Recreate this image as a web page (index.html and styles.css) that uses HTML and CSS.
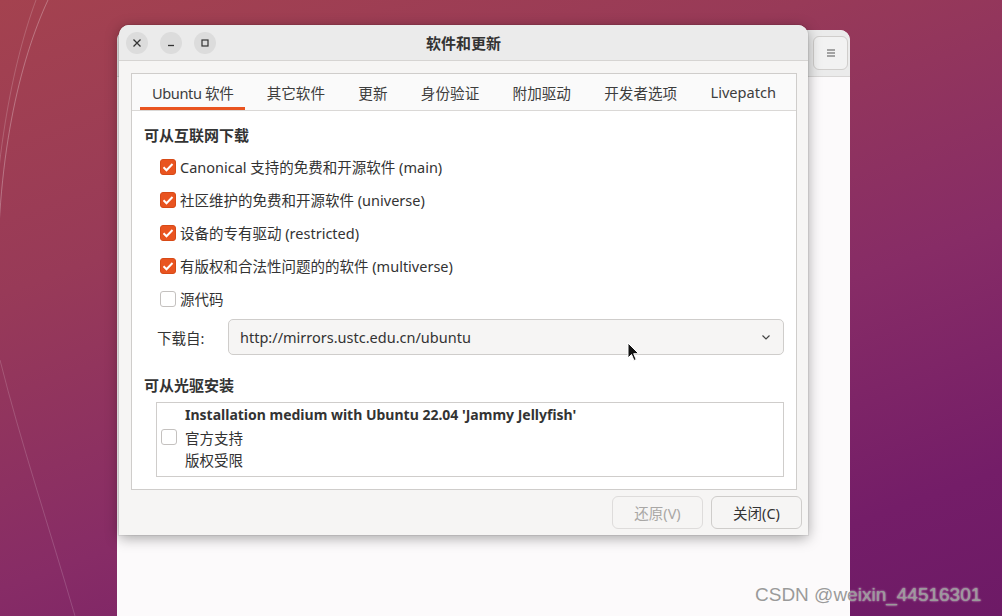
FILE: index.html
```html
<!DOCTYPE html>
<html lang="zh-CN">
<head>
    <meta charset="UTF-8">
    <title>软件和更新</title>
    <link rel="stylesheet" href="styles.css">
</head>
<body>

    <div class="desktop">
        <svg class="arcs" width="1002" height="616" viewBox="0 0 1002 616">
            <path d="M48 0 C 20 60, -5 160, -2 300" stroke="rgba(255,255,255,0.28)" stroke-width="1" fill="none"/>
            <path d="M36 0 C 10 70, -10 180, -8 320" stroke="rgba(255,255,255,0.18)" stroke-width="1" fill="none"/>
            <path d="M0 360 C 20 440, 50 530, 75 616" stroke="rgba(255,255,255,0.16)" stroke-width="1" fill="none"/>
        </svg>

        <!-- janela de tras -->
        <div class="janela-fundo">
            <div class="fundo-header">
                <span class="menu-btn">
                    <svg width="12" height="12" viewBox="0 0 12 12"><path d="M2 3h8M2 6h8M2 9h8" stroke="#555" stroke-width="1.2"/></svg>
                </span>
            </div>
            <div class="fundo-corpo"></div>
        </div>

        <!-- dialogo principal -->
        <div class="dialogo">
            <div class="titulo">
                <div class="controles">
                    <span class="ctrl">
                        <svg width="10" height="10" viewBox="0 0 10 10"><path d="M1.5 1.5l7 7M8.5 1.5l-7 7" stroke="#333" stroke-width="1.3"/></svg>
                    </span>
                    <span class="ctrl">
                        <svg width="10" height="10" viewBox="0 0 10 10"><path d="M2 7.5h6" stroke="#333" stroke-width="1.3"/></svg>
                    </span>
                    <span class="ctrl">
                        <svg width="10" height="10" viewBox="0 0 10 10"><rect x="2" y="2" width="6" height="6" stroke="#333" stroke-width="1.2" fill="none"/></svg>
                    </span>
                </div>
                <div class="titulo-texto">软件和更新</div>
            </div>

            <div class="conteudo">
                <div class="notebook">
                    <div class="abas">
                        <span class="aba ativa">Ubuntu 软件</span>
                        <span class="aba">其它软件</span>
                        <span class="aba">更新</span>
                        <span class="aba">身份验证</span>
                        <span class="aba">附加驱动</span>
                        <span class="aba">开发者选项</span>
                        <span class="aba">Livepatch</span>
                    </div>

                    <div class="pagina">
                        <h3 class="secao-titulo">可从互联网下载</h3>
                        <div class="opcoes">
                            <label class="opcao"><span class="check marcado"></span>Canonical 支持的免费和开源软件 (main)</label>
                            <label class="opcao"><span class="check marcado"></span>社区维护的免费和开源软件 (universe)</label>
                            <label class="opcao"><span class="check marcado"></span>设备的专有驱动 (restricted)</label>
                            <label class="opcao"><span class="check marcado"></span>有版权和合法性问题的的软件 (multiverse)</label>
                            <label class="opcao"><span class="check"></span>源代码</label>
                        </div>

                        <div class="download">
                            <span class="download-label">下载自:</span>
                            <div class="combo">
                                <span>http://mirrors.ustc.edu.cn/ubuntu</span>
                                <svg width="12" height="12" viewBox="0 0 12 12"><path d="M2.5 4.5l3.5 3.5 3.5-3.5" stroke="#444" stroke-width="1.2" fill="none"/></svg>
                                <svg class="cursor" width="14" height="20" viewBox="0 0 14 20"><path d="M1 1v15l3.5-3.5 2.5 6 2.2-1-2.5-5.8h5z" fill="#111" stroke="#fff" stroke-width="1"/></svg>
                            </div>
                        </div>

                        <h3 class="secao-titulo cd">可从光驱安装</h3>
                        <div class="cdrom">
                            <span class="check"></span>
                            <div class="cdrom-texto">
                                <strong>Installation medium with Ubuntu 22.04 'Jammy Jellyfish'</strong>
                                <span>官方支持</span>
                                <span>版权受限</span>
                            </div>
                        </div>
                    </div>
                </div>

                <div class="botoes">
                    <button class="btn" disabled>还原(V)</button>
                    <button class="btn">关闭(C)</button>
                </div>
            </div>
        </div>

        <div class="marca">CSDN @weixin_44516301</div>
    </div>

</body>
</html>
```

FILE: styles.css
```css
/* Geral */
body {
    margin: 0;
    font-family: "Noto Sans", "Noto Sans CJK SC", sans-serif;
    color: #333;
}

.desktop {
    position: relative;
    width: 1002px;
    height: 616px;
    overflow: hidden;
    background: linear-gradient(160deg, #a4424f 0%, #983a58 30%, #872c66 60%, #741d68 85%, #6d1a66 100%);
}

.arcs {
    position: absolute;
    left: 0;
    top: 0;
}

/* Janela de fundo */
.janela-fundo {
    position: absolute;
    left: 117px;
    top: 30px;
    width: 733px;
    height: 600px;
    background-color: #fcfafb;
    border-radius: 10px 10px 0 0;
    display: flex;
    flex-direction: column;
}

.fundo-header {
    height: 46px;
    background-color: #ebebeb;
    border-bottom: 1px solid #d8d6d5;
    border-radius: 10px 10px 0 0;
    display: flex;
    justify-content: flex-end;
    align-items: center;
    padding-right: 2px;
}

.menu-btn {
    width: 33px;
    height: 32px;
    border: 1px solid #d0cecc;
    border-radius: 6px;
    background-color: #f2f2f2;
    display: flex;
    align-items: center;
    justify-content: center;
}

.fundo-corpo {
    flex: 1;
}

/* Dialogo */
.dialogo {
    position: absolute;
    left: 119px;
    top: 25px;
    width: 689px;
    height: 510px;
    background-color: #f6f5f4;
    border-radius: 10px 10px 0 0;
    box-shadow: 0 3px 14px rgba(0, 0, 0, 0.35), 0 0 0 1px rgba(0, 0, 0, 0.06);
    display: flex;
    flex-direction: column;
}

.titulo {
    position: relative;
    height: 35px;
    background-color: #ebebeb;
    border-bottom: 1px solid #d6d4d2;
    border-radius: 10px 10px 0 0;
    display: flex;
    align-items: center;
    justify-content: center;
}

.controles {
    position: absolute;
    left: 7px;
    top: 7px;
    display: flex;
    gap: 12px;
}

.ctrl {
    width: 22px;
    height: 22px;
    border-radius: 50%;
    background-color: #dcdcdc;
    display: flex;
    align-items: center;
    justify-content: center;
}

.titulo-texto {
    font-weight: bold;
    font-size: 15px;
    color: #333;
}

.conteudo {
    flex: 1;
    padding: 12px 11px 0 12px;
    display: flex;
    flex-direction: column;
}

/* Notebook */
.notebook {
    height: 415px;
    border: 1px solid #cfcdcb;
    background-color: #ffffff;
    display: flex;
    flex-direction: column;
}

.abas {
    height: 36px;
    background-color: #fafafa;
    border-bottom: 1px solid #dad8d6;
    display: flex;
    padding-left: 8px;
}

.aba {
    font-size: 14.6px;
    color: #3d3d3d;
    padding: 3px 12px 0 12px;
    margin-right: 9.3px;
    display: flex;
    align-items: center;
    white-space: nowrap;
    border-bottom: 3px solid transparent;
}

.aba.ativa {
    border-bottom-color: #e95420;
    letter-spacing: -0.4px;
}

.pagina {
    padding: 13px 12px 0 12px;
}

.secao-titulo {
    margin: 0;
    font-size: 15px;
    font-weight: bold;
    color: #333;
    line-height: 22px;
}

.opcoes {
    display: flex;
    flex-direction: column;
    padding-left: 16px;
    margin-top: 4px;
}

.opcao {
    display: flex;
    align-items: center;
    height: 33px;
    font-size: 14.5px;
    color: #333;
}

.check {
    width: 14px;
    height: 14px;
    border: 1px solid #c4c1bf;
    border-radius: 3px;
    background-color: #fff;
    margin-right: 4px;
    flex-shrink: 0;
}

.check.marcado {
    border-color: #d74a17;
    background-color: #e95420;
    background-image: url("data:image/svg+xml,%3Csvg xmlns='http://www.w3.org/2000/svg' width='16' height='16' viewBox='0 0 16 16'%3E%3Cpath d='M3.5 8.2l3 3 6-6.2' stroke='white' stroke-width='2' fill='none'/%3E%3C/svg%3E");
    background-position: center;
}

.download {
    display: flex;
    align-items: center;
    margin-top: 4px;
    padding-left: 13px;
}

.download-label {
    width: 71px;
    font-size: 14.5px;
}

.combo {
    position: relative;
    flex: 1;
    height: 34px;
    border: 1px solid #cfcdcb;
    border-radius: 5px;
    background-color: #f6f5f4;
    display: flex;
    align-items: center;
    justify-content: space-between;
    padding: 0 11px 0 11px;
    font-size: 14.5px;
}

.cursor {
    position: absolute;
    left: 398px;
    top: 22px;
}

.secao-titulo.cd {
    margin-top: 19px;
}

.cdrom {
    margin: 6px 0 0 12px;
    height: 75px;
    border: 1px solid #cfcdcb;
    display: flex;
    align-items: flex-start;
    padding: 1px 0 0 4px;
    box-sizing: border-box;
}

.cdrom .check {
    margin: 25px 8px 0 0;
}

.cdrom-texto {
    display: flex;
    flex-direction: column;
    font-size: 14.5px;
    line-height: 22.5px;
}

.cdrom-texto strong {
    font-size: 14px;
}

/* Botoes */
.botoes {
    display: flex;
    justify-content: flex-end;
    gap: 8px;
    margin-top: 6px;
    margin-right: -5px;
}

.btn {
    width: 91px;
    height: 33px;
    border: 1px solid #cfcdcb;
    border-radius: 6px;
    background-color: #f6f5f4;
    font-family: "Noto Sans", "Noto Sans CJK SC", sans-serif;
    font-size: 14.5px;
    color: #333;
}

.btn:disabled {
    color: #a9a7a5;
    border-color: #dedcdb;
}

/* Marca d'agua */
.marca {
    position: absolute;
    left: 755px;
    top: 584px;
    font-family: "Liberation Sans", Arial, sans-serif;
    font-size: 19px;
    color: #9a9a9a;
    text-shadow: 0 0 2px rgba(255, 255, 255, 0.8);
}
```
